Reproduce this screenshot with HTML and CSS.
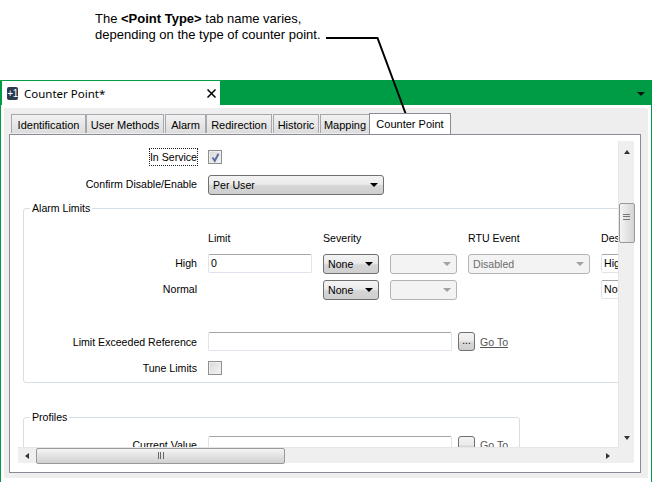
FILE: index.html
```html
<!DOCTYPE html>
<html lang="en">
<head>
<meta charset="utf-8">
<title>Counter Point</title>
<link rel="stylesheet" href="styles.css">
</head>
<body>
<header class="note">
  <p>The <b>&lt;Point Type&gt;</b> tab name varies,<br>depending on the type of counter point.</p>
</header>
<section class="window">
  <div class="docbar">
    <div class="doctab">
      <span class="docicon">+1</span>
      <span class="doctitle">Counter Point*</span>
      <svg class="close" width="9" height="9" viewBox="0 0 9 9"><path d="M0.5 0.5L8.5 8.5M8.5 0.5L0.5 8.5" stroke="#000" stroke-width="1.5" fill="none"/></svg>
    </div>
    <span class="menuarrow"></span>
  </div>
  <div class="body">
    <nav class="tabs">
      <span class="tab t1">Identification</span>
      <span class="tab t2">User Methods</span>
      <span class="tab t3">Alarm</span>
      <span class="tab t4">Redirection</span>
      <span class="tab t5">Historic</span>
      <span class="tab t6">Mapping</span>
      <span class="tab active">Counter Point</span>
    </nav>
    <div class="panel">
      <div class="scroller">
        <div class="viewport">
          <div class="row first">
            <span class="label"><span class="focus">In Service</span></span>
            <span class="check"><svg width="11" height="11" viewBox="0 0 11 11"><path d="M2.5 5.5L4.8 8.8L8.5 1.8" stroke="#5a6fa8" stroke-width="2" fill="none"/></svg></span>
          </div>
          <div class="row second">
            <span class="label">Confirm Disable/Enable</span>
            <span class="select s-confirm">Per User<i class="arrow"></i></span>
          </div>
          <fieldset class="group alarm">
            <legend>Alarm Limits</legend>
            <div class="limits">
              <span></span>
              <span class="head">Limit</span>
              <span class="head">Severity</span>
              <span></span>
              <span class="head">RTU Event</span>
              <span class="head">Description</span>

              <span class="label">High</span>
              <span class="input">0</span>
              <span class="select">None<i class="arrow"></i></span>
              <span class="select off"><i class="arrow"></i></span>
              <span class="select off">Disabled<i class="arrow"></i></span>
              <span class="input">High</span>

              <span class="label">Normal</span>
              <span></span>
              <span class="select">None<i class="arrow"></i></span>
              <span class="select off"><i class="arrow"></i></span>
              <span></span>
              <span class="input">Normal</span>
            </div>
            <div class="row ref inset">
              <span class="label">Limit Exceeded Reference</span>
              <span class="input wide"></span>
              <span class="btn">...</span>
              <span class="goto">Go To</span>
            </div>
            <div class="row tune inset">
              <span class="label">Tune Limits</span>
              <span class="check"></span>
            </div>
          </fieldset>
          <fieldset class="group profiles">
            <legend>Profiles</legend>
            <div class="row current inset">
              <span class="label">Current Value</span>
              <span class="input wide"></span>
              <span class="btn"></span>
              <span class="goto">Go To</span>
            </div>
          </fieldset>
        </div>
        <div class="vbar">
          <span class="up"></span>
          <span class="vthumb"><i></i></span>
          <span class="down"></span>
        </div>
        <div class="hbar">
          <span class="left"></span>
          <span class="hthumb"><i></i></span>
          <span class="right"></span>
        </div>
        <div class="corner"></div>
      </div>
    </div>
  </div>
</section>
<svg class="callout" width="652" height="130" viewBox="0 0 652 130"><path d="M326 38H377.500L408 120" stroke="#000" stroke-width="2" fill="none"/></svg>
</body>
</html>
```
FILE: styles.css
```css
* { box-sizing: border-box; }
html, body { margin: 0; padding: 0; }
body {
  width: 652px;
  height: 482px;
  overflow: hidden;
  position: relative;
  background: #fff;
  font-family: "Liberation Sans", sans-serif;
  font-size: 10.6px;
  color: #000;
}
.note { height: 80px; padding: 11px 0 0 95px; font-family: "Liberation Sans", sans-serif; font-size: 13px; line-height: 16px; }
.note p { margin: 0; }
.callout { position: absolute; left: 0; top: 0; pointer-events: none; }

.window { height: 402px; width: 652px; padding: 0 1px 0 1px; border-left: 1px solid #009c45; border-right: 1px solid #009c45; }
.docbar { margin: 0 -2px; height: 25px; background: #009c45; display: flex; align-items: stretch; justify-content: space-between; padding: 1px 7px 0 2px; }
.doctab { width: 218px; background: #fff; display: flex; align-items: center; padding: 0 4px 0 5px; }
.docicon { width: 11px; height: 13px; background: #2b3b50; border-radius: 2px; color: #fff; font-size: 10px; line-height: 13px; text-align: center; letter-spacing: -0.5px; }
.doctitle { margin-left: 6px; font-size: 11.5px; flex: 1; font-family: "Noto Sans", sans-serif; }
.close { margin-right: 0; }
.menuarrow { align-self: center; margin-top: 2px; width: 0; height: 0; border: 4px solid transparent; border-top-color: #111; border-bottom: 0; }

.body { height: 370px; background: #eee; margin: 3px 2px 0 2px; border-radius: 0 3px 0 0; padding: 5px 7px 5px 5px; box-shadow: 0 -3px 0 #fff; }
.tabs { height: 21px; display: flex; align-items: flex-end; margin-top: -1px; margin-bottom: 1px; font-size: 11px; }
.tab { height: 19px; background: linear-gradient(#f2f2f2, #dcdcdc); border: 1px solid #a6a8ad; border-bottom: 0; line-height: 21px; text-align: center; white-space: nowrap; }
.t1 { width: 75px; margin-left: 2px; }
.t2 { width: 78px; margin-left: 0; }
.t3 { width: 41px; margin-left: 1px; }
.t4 { width: 66px; }
.t5 { width: 46px; margin-left: 1px; }
.t6 { width: 50px; margin-left: 1px; }
.tab.active { width: 82px; height: 21px; background: #fff; border-color: #898c95; position: relative; top: 1px; z-index: 1; margin-left: -1px; line-height: 20px; }
.panel { height: 339px; width: 632px; background: #fff; border: 1px solid #898c95; padding: 6px 6px 9px 8px; }

.scroller { display: grid; grid-template-columns: 600px 16px; grid-template-rows: 306px 16px; height: 322px; }
.viewport { overflow: hidden; background: #fff; }
.vbar { background: #efefef; border-left: 1px solid #e6e6e6; display: flex; flex-direction: column; align-items: center; position: relative; padding-top: 9px; }
.up { width: 0; height: 0; border: 3.5px solid transparent; border-bottom: 4px solid #333; border-top: 0; }
.down { width: 0; height: 0; border: 3.5px solid transparent; border-top: 4px solid #333; border-bottom: 0; margin-top: auto; margin-bottom: 7px; }
.vthumb { margin-top: 49px; width: 16px; height: 40px; background: linear-gradient(90deg, #f4f4f4, #d4d4d4); border: 1px solid #98999c; border-radius: 2px; display: flex; align-items: center; justify-content: center; }
.vthumb i { width: 7px; height: 6px; border-top: 1px solid #777; border-bottom: 1px solid #777; background: linear-gradient(#777, #777) center / 100% 1px no-repeat; margin-top: -13px; }
.hbar { background: #efefef; border-top: 1px solid #e6e6e6; display: flex; align-items: center; padding-left: 7px; }
.left { width: 0; height: 0; border: 3.5px solid transparent; border-right: 4px solid #333; border-left: 0; }
.right { width: 0; height: 0; border: 3.5px solid transparent; border-left: 4px solid #333; border-right: 0; margin-left: auto; margin-right: 8px; }
.hthumb { margin-left: 7px; width: 249px; height: 16px; background: linear-gradient(#f4f4f4, #d0d0d0); border: 1px solid #98999c; border-radius: 2px; display: flex; align-items: center; justify-content: center; }
.hthumb i { width: 6px; height: 7px; border-left: 1px solid #666; border-right: 1px solid #666; background: linear-gradient(#666, #666) center / 1px 100% no-repeat; }
.corner { background: #efefef; }

.row { display: flex; align-items: center; }
.first { margin-top: 7px; height: 18px; }
.second { margin-top: 9px; height: 20px; }
.second .label { margin-top: -2px; }
.label { width: 179px; text-align: right; white-space: nowrap; flex: none; margin-right: 11px; line-height: 14px; }
.inset .label, .limits .label { width: 173px; margin-right: 0; }
.inset .label { margin-right: 11px; }
.focus { outline: 1px dotted #222; outline-offset: 0; padding: 1px 0; display: inline-block; }
.check { width: 14px; height: 14px; flex: none; border: 1px solid #8e8f8f; background: linear-gradient(135deg, #d8d8d8, #f4f4f4); box-shadow: inset 0 0 0 1px #eee; display: flex; align-items: center; justify-content: center; }

.select { position: relative; display: block; height: 20px; border: 1px solid #707070; border-radius: 3px; background: linear-gradient(#f3f3f3 0, #ebebeb 45%, #d5d5d5 55%, #cfcfcf); line-height: 18px; padding-left: 4px; white-space: nowrap; }
.s-confirm { width: 176px; }
.select.off { background: #f3f3f3; border-color: #b4b4b4; color: #6d6d6d; }
.arrow { position: absolute; right: 5px; top: 7px; width: 0; height: 0; border: 4px solid transparent; border-top: 4px solid #000; border-bottom: 0; }
.off .arrow { border-top-color: #a2a2a2; }

.input { display: block; height: 19px; border: 1px solid #dfe3eb; border-top-color: #a6a6a6; border-radius: 2px; background: #fff; line-height: 17px; padding-left: 2px; overflow: hidden; white-space: nowrap; }
.wide { width: 244px; flex: none; }
.btn { width: 17px; height: 19px; margin-left: 6px; flex: none; border: 1px solid #707070; border-radius: 3px; background: linear-gradient(#f3f3f3 0, #ebebeb 45%, #d8d8d8 55%, #cfcfcf); text-align: center; line-height: 16px; font-size: 10px; }
.goto { margin-left: 5px; color: #555; text-decoration: underline; white-space: nowrap; }
.ref .label, .ref .goto { margin-top: 2px; }

.group { margin: 0 0 0 5px; padding: 0; border: 1px solid #d5dfe5; border-radius: 3px; min-width: 0; }
.group legend { margin-left: 6px; padding: 0 2px; height: 14px; line-height: 14px; }
.alarm { width: 700px; margin-top: 6px; padding-bottom: 5px; }
.limits { display: grid; grid-template-columns: 173px 104px 56px 67px 122px 100px; column-gap: 11px; grid-template-rows: 18px 20px 20px; row-gap: 6px; margin-top: 15px; align-items: center; }
.limits .input { height: 19px; margin-bottom: 1px; }
.limits .label { margin-top: -2px; }
.head { white-space: nowrap; overflow: hidden; line-height: 14px; margin-top: -2px; }
.ref { margin-top: 31px; height: 20px; }
.tune { margin-top: 8px; height: 18px; }
.profiles { width: 497px; margin-top: 27px; height: 80px; }
.current { margin-top: 11px; height: 20px; }
```
